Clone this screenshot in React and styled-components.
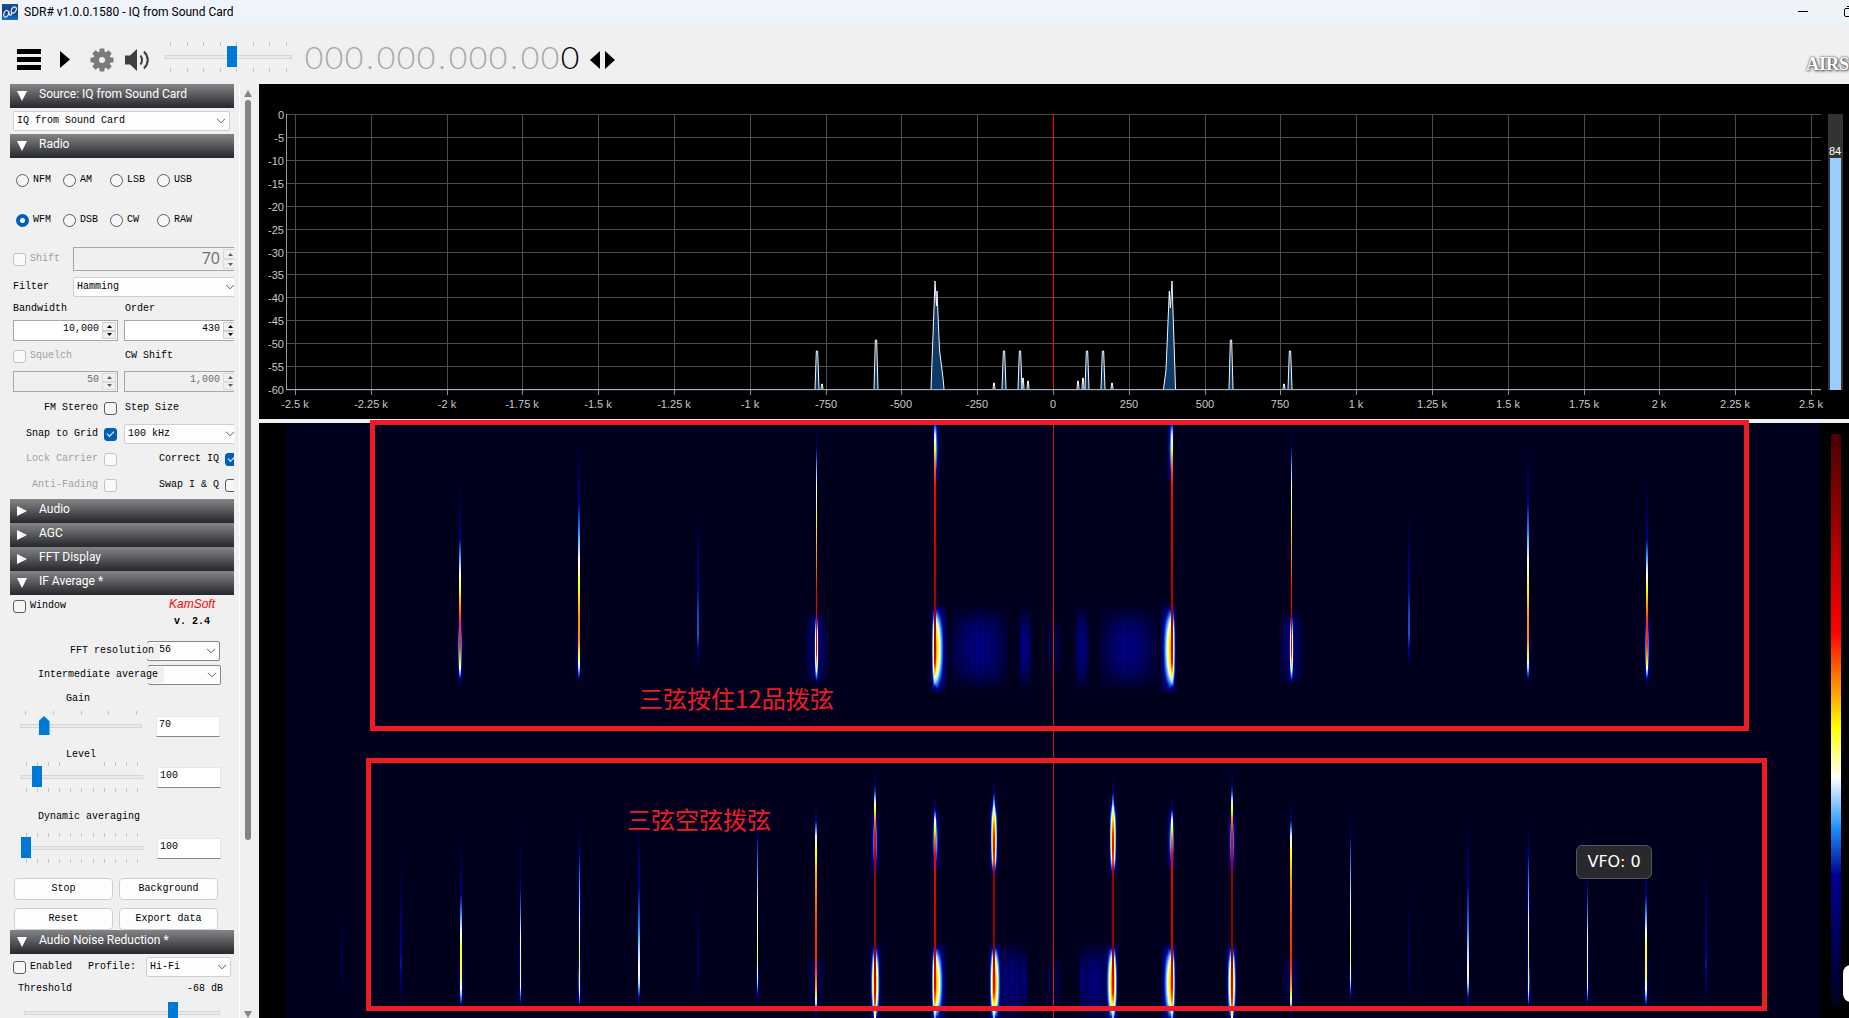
import React from "react";
import styled, { createGlobalStyle, css } from "styled-components";

const UI = 'Roboto, "Open Sans", sans-serif';
const MONO = '"Liberation Mono", "Noto Sans CJK SC", monospace';
const BLUE = "#0078d7";

const Global = createGlobalStyle`
  *, *::before, *::after { box-sizing: border-box; }
  html, body { margin: 0; height: 100%; overflow: hidden; }
  body { background: #f0f0f0; font: 10px/14px ${MONO}; color: #000; }
  button, input, select { font: inherit; color: inherit; margin: 0; border-radius: 0; }
`;

/* ---------- window ---------- */
const Window = styled.div`
  display: flex;
  flex-direction: column;
  height: 100vh;
  overflow: hidden;
`;
const TitleBar = styled.header`
  display: flex;
  align-items: center;
  flex: none;
  height: 23px;
  padding-left: 2px;
  gap: 6px;
  background: linear-gradient(90deg, #eff3fc 0 80%, #eef3f8);
  font: 12px/16px ${UI};
`;
const Title = styled.h1`
  flex: 1;
  margin: 0;
  font: inherit;
`;
const CaptionButton = styled.button`
  display: grid;
  place-items: center;
  width: 46px;
  height: 23px;
  padding: 0;
  border: 0;
  background: none;
`;
const CaptionButtons = styled.div`
  display: flex;
  margin-right: -23px;
`;
const Toolbar = styled.div`
  display: flex;
  align-items: center;
  flex: none;
  height: 61px;
  padding: 6px 0 0 16px;
  overflow: hidden;
`;
const IconButton = styled.button`
  display: grid;
  place-items: center;
  flex: none;
  width: ${(p) => p.$w || 36}px;
  height: 30px;
  margin-right: ${(p) => p.$mr || 0}px;
  padding: 6px 0 0;
  border: 0;
  background: none;
`;
const Frequency = styled.output`
  display: flex;
  margin-left: 12px;
  font: 300 32px/40px Lato, ${UI};
  color: #a6a6a6;
`;
const Digit = styled.span`
  width: ${(p) => (p.$dot ? 12 : 20)}px;
  text-align: center;
  color: ${(p) => (p.$active ? "#000" : "inherit")};
`;
const Brand = styled.div`
  margin-left: auto;
  padding-top: 14px;
  white-space: nowrap;
  font: bold 18px/30px "Liberation Serif", serif;
  color: #fff;
  text-shadow: 0 0 2px #333, 1px 1px 3px #444;
`;
const Body = styled.div`
  display: flex;
  flex: 1;
  min-height: 0;
`;

/* ---------- side panel ---------- */
const Sidebar = styled.aside`
  display: flex;
  flex: none;
  width: 259px;
  padding-left: 10px;
`;
const Panels = styled.div`
  width: 224px;
  overflow: hidden;
`;
const Scrollbar = styled.div`
  display: flex;
  flex-direction: column;
  align-items: center;
  width: 20px;
  margin-left: 5px;
  padding: 6px 4px 0 0;
  border-left: 1px solid #fff;
`;
const Thumb = styled.div`
  width: 6px;
  height: 740px;
  margin: 3px 0 auto;
  border-radius: 3px;
  background: #858585;
`;
const PanelHeader = styled.button`
  display: flex;
  align-items: center;
  width: 100%;
  height: 24px;
  padding: 0 0 4px 7px;
  gap: 12px;
  border: 0;
  background: linear-gradient(#858587, #5a5b5f 45%, #25272c);
  color: #fff;
  font: 12px/16px ${UI};
  svg { margin-top: 4px; }
`;
const Section = styled.div`
  padding: ${(p) => p.$pad || "0"};
`;
const Row = styled.div`
  display: flex;
  align-items: ${(p) => (p.$top ? "flex-start" : "center")};
  height: ${(p) => p.$h || 20}px;
  margin-top: ${(p) => p.$mt || 0}px;
  padding-left: ${(p) => p.$pl || 3}px;
`;
const Label = styled.label`
  flex: none;
  width: ${(p) => (p.$w ? p.$w + "px" : "auto")};
  white-space: nowrap;
  text-align: ${(p) => (p.$right ? "right" : "left")};
  padding-right: ${(p) => (p.$right ? 6 : 0)}px;
  color: ${(p) => (p.$off ? "#a0a0a0" : "#000")};
`;
const CoverLabel = styled(Label)`
  z-index: 1;
  width: auto;
  height: 16px;
  line-height: 16px;
  padding-right: 6px;
  margin-right: -${(p) => p.$over}px;
  margin-left: ${(p) => p.$indent}px;
  background: #f0f0f0;
`;
const Modes = styled.div`
  display: grid;
  grid-template-columns: repeat(4, 47px);
  grid-auto-rows: 40px;
  align-items: center;
  padding: 2px 0 0 6px;
`;
const Choice = styled.label`
  display: flex;
  align-items: center;
  height: 22px;
  gap: 4px;
`;
const Radio = styled.input.attrs({ type: "radio" })`
  appearance: none;
  width: 13px;
  height: 13px;
  border: 1px solid #5c5c5c;
  border-radius: 50%;
  background: #f6f6f6;
  &:checked { border: 4px solid #005fb8; background: #fff; }
`;
const Check = styled.input.attrs({ type: "checkbox" })`
  appearance: none;
  display: grid;
  place-items: center;
  flex: none;
  width: 13px;
  height: 13px;
  margin-right: ${(p) => p.$gap || 0}px;
  border: 1px solid #5c5c5c;
  border-radius: 3px;
  background: #f6f6f6;
  &:disabled { border-color: #c3c3c3; background: #fafafa; }
  &:checked { border-color: #005fb8; background: #005fb8; }
  &:checked::after {
    content: "";
    width: 7px;
    height: 4px;
    margin-top: -2px;
    border: solid #fff;
    border-width: 0 0 1px 1px;
    transform: rotate(-45deg);
  }
`;
const SelectBox = styled.div`
  display: grid;
  flex: none;
  align-items: center;
  width: ${(p) => p.$w}px;
  > * { grid-area: 1 / 1; }
  svg { justify-self: end; margin-right: 4px; pointer-events: none; }
`;
const SelectField = styled.select`
  appearance: none;
  width: 100%;
  height: 20px;
  padding: 0 4px ${(p) => (p.$strong ? 2 : 0)}px ${(p) => (p.$strong ? 5 : 3)}px;
  border: 1px solid ${(p) => (p.$strong ? "#868686" : "#d0d0d0")};
  border-radius: 2px;
  background: #fdfdfd;
`;
const SpinBox = styled.div`
  display: flex;
  flex: none;
  width: ${(p) => p.$w}px;
  height: ${(p) => p.$h || 21}px;
  margin-right: 6px;
  border: 1px solid #a5a7ac;
  background: ${(p) => (p.$off ? "#f0f0f0" : "#fff")};
  color: ${(p) => (p.$off ? "#6d6d6d" : "#000")};
`;
const SpinInput = styled.input`
  flex: 1;
  min-width: 0;
  padding: 0 2px 4px;
  border: 0;
  background: none;
  text-align: right;
  ${(p) => p.$big && css`padding-bottom: 2px; font: 16px/20px "Open Sans", sans-serif;`}
`;
const SpinButtons = styled.div`
  display: grid;
  grid-template-rows: 1fr 1fr;
  width: 14px;
  margin: 1px;
  opacity: ${(p) => (p.$off ? 0.6 : 1)};
`;
const SpinButton = styled.button`
  display: grid;
  place-items: center;
  min-height: 0;
  padding: 0;
  border: 1px solid #cfcfcf;
  background: #f0f0f0;
`;
const Credits = styled.div`
  width: 60px;
  margin-left: auto;
  margin-right: 12px;
  text-align: center;
  line-height: 18px;
`;
const Vendor = styled.div`
  font: italic 12px/18px "Liberation Sans", sans-serif;
  color: #f00;
`;
const Version = styled.div`
  font-weight: bold;
`;
const Heading = styled.div`
  display: flex;
  align-items: flex-end;
  height: ${(p) => p.$h}px;
  padding: 0 0 ${(p) => p.$pb}px ${(p) => p.$pl}px;
`;
const TextInput = styled.input`
  width: 64px;
  height: 21px;
  margin-left: 14px;
  padding: 0 2px 3px;
  border: 1px solid #e6e6e6;
  border-bottom-color: #868686;
  background: #fff;
`;
const Track = styled.div`
  display: flex;
  flex-direction: column;
  flex: none;
  justify-content: center;
  width: ${(p) => p.$w}px;
`;
const Ticks = styled.div`
  display: flex;
  justify-content: space-between;
  height: 4px;
  padding: 0 5px;
  visibility: ${(p) => (p.$hide ? "hidden" : "visible")};
`;
const Tick = styled.i`
  width: 1px;
  background: #c4c4c4;
  visibility: ${(p) => (p.$hide ? "hidden" : "inherit")};
`;
const Range = styled.input.attrs({ type: "range" })`
  appearance: none;
  width: 100%;
  height: 22px;
  background: none;
  &::-webkit-slider-runnable-track {
    height: 4px;
    border: 1px solid #d6d6d6;
    background: #e7eaea;
  }
  &::-webkit-slider-thumb {
    appearance: none;
    width: 10px;
    height: 21px;
    margin-top: -10px;
    margin-left: -1px;
    background: ${BLUE};
    ${(p) => p.$pointed && css`
      width: 11px;
      height: 19px;
      margin-top: -9px;
      clip-path: polygon(50% 0, 100% 28%, 100% 100%, 0 100%, 0 28%);
    `}
  }
`;
const Actions = styled.div`
  display: grid;
  grid-template-columns: 99px 99px;
  gap: 8px 6px;
  padding: 15px 0 0 4px;
`;
const PushButton = styled.button`
  height: 22px;
  padding: 0;
  border: 1px solid #d0d0d0;
  border-radius: 4px;
  background: #fdfdfd;
`;

/* ---------- display ---------- */
const Display = styled.main`
  position: relative;
  display: flex;
  flex-direction: column;
  flex: 1;
  min-width: 0;
  overflow: hidden;
  background: #000;
  svg { display: block; }
`;
const Plot = styled.svg`
  flex: none;
  width: 100%;
  text { font: 11px "Liberation Sans", sans-serif; fill: #c8c8c8; }
`;
const Splitter = styled.div`
  flex: none;
  height: 4px;
  background: #f0f0f0;
`;
const Marker = styled.div`
  position: absolute;
  left: ${(p) => p.$x}px;
  top: ${(p) => p.$y}px;
  width: ${(p) => p.$w}px;
  height: ${(p) => p.$h}px;
  border: 5px solid #ed1c24;
`;
const Note = styled.div`
  position: absolute;
  left: ${(p) => p.$x}px;
  top: ${(p) => p.$y}px;
  color: #ed1c24;
  font: 24px/28px "Noto Sans CJK SC", sans-serif;
  white-space: nowrap;
`;
const Tooltip = styled.div`
  position: absolute;
  left: 1317px;
  top: 761px;
  width: 76px;
  height: 34px;
  border: 1px solid #55565a;
  border-radius: 6px;
  background: rgba(42, 43, 47, 0.94);
  color: #fff;
  font: 16px/32px "DejaVu Sans", sans-serif;
  text-align: center;
`;
const Grip = styled.div`
  position: absolute;
  right: -14px;
  top: 881px;
  width: 20px;
  height: 37px;
  border-radius: 8px;
  background: #fff;
`;

/* ---------- small drawings ---------- */
const Chevron = () => (
  <svg width="10" height="6" viewBox="0 0 10 6" fill="none" stroke="#5c5c5c">
    <path d="M1 .8 5 4.8 9 .8" />
  </svg>
);
const Tri = ({ d, w = 10, h = 9, fill = "#fff" }) => (
  <svg width={w} height={h} viewBox="0 0 10 10" preserveAspectRatio="none">
    <path fill={fill} d={{ up: "M5 0 10 10H0Z", down: "M0 0H10L5 10Z", right: "M0 0 10 5 0 10Z", left: "M10 0V10L0 5Z" }[d]} />
  </svg>
);
const AppIcon = () => (
  <svg width="16" height="16" viewBox="0 0 16 16">
    <defs>
      <linearGradient id="app" x2="0" y2="1"><stop stopColor="#1b4f96" /><stop offset=".5" stopColor="#123a86" /><stop offset="1" stopColor="#1672c4" /></linearGradient>
    </defs>
    <rect width="16" height="16" fill="url(#app)" />
    <g fill="none" stroke="#dcecff" strokeWidth="1.2">
      <ellipse cx="4.200" cy="9.800" rx="2.300" ry="3.400" transform="rotate(25 4.200 9.800)" />
      <path d="M6.500 7.500C7.500 13.500 10.500 11 9.300 8" />
      <ellipse cx="11.800" cy="6" rx="2.200" ry="3.300" transform="rotate(30 11.800 6)" />
    </g>
  </svg>
);
const Gear = () => (
  <svg width="24" height="24" viewBox="-12 -12 24 24" fill="#7b7b7b">
    {[0, 45, 90, 135, 180, 225, 270, 315].map((a) => (
      <path key={a} d="M-3-7-2.200-11.500H2.200L3-7Z" transform={`rotate(${a})`} />
    ))}
    <path fillRule="evenodd" d="M0-8.500A8.500 8.500 0 1 1 0 8.500 8.500 8.500 0 1 1 0-8.500ZM0-3A3 3 0 1 0 0 3 3 3 0 1 0 0-3Z" />
  </svg>
);
const Speaker = () => (
  <svg width="25" height="22" viewBox="0 0 25 22" fill="#404040">
    <path d="M0 6.500H5L12 0V22L5 15.500H0Z" />
    <g fill="none" stroke="#404040" strokeWidth="2">
      <path d="M15.500 6.500Q18.500 11 15.500 15.500" />
      <path d="M19 2.500Q26.500 11 19 19.500" />
    </g>
  </svg>
);

/* ---------- form parts ---------- */
const Select = ({ id, value, w, strong, ...rest }) => (
  <SelectBox $w={w}>
    <SelectField id={id} defaultValue={value} $strong={strong} {...rest}>
      <option>{value}</option>
    </SelectField>
    <Chevron />
  </SelectBox>
);
const Spin = ({ id, value, w, h, off, big, label }) => (
  <SpinBox $w={w} $h={h} $off={off}>
    <SpinInput id={id} aria-label={label} defaultValue={value} disabled={off} $big={big} />
    <SpinButtons $off={off}>
      <SpinButton aria-label="Increase" disabled={off}><Tri d="up" w={5} h={3} fill="#000" /></SpinButton>
      <SpinButton aria-label="Decrease" disabled={off}><Tri d="down" w={5} h={3} fill="#000" /></SpinButton>
    </SpinButtons>
  </SpinBox>
);
const Slider = ({ id, w, value, top, bottom, pointed, label, skip = [] }) => (
  <Track $w={w}>
    <Ticks $hide={!top}>
      {Array.from({ length: top || 0 }, (_, i) => <Tick key={i} $hide={skip.includes(i)} />)}
    </Ticks>
    <Range id={id} aria-label={label} defaultValue={value} $pointed={pointed} />
    <Ticks $hide={!bottom}>
      {Array.from({ length: bottom || 0 }, (_, i) => <Tick key={i} />)}
    </Ticks>
  </Track>
);
const Panel = ({ title, open, pad, children }) => (
  <>
    <PanelHeader aria-expanded={!!open}>
      {open ? <Tri d="down" w={10} h={10} /> : <Tri d="right" w={10} h={10} />}
      {title}
    </PanelHeader>
    {open && <Section $pad={pad}>{children}</Section>}
  </>
);

/* ---------- spectrum ---------- */
const CENTER = 1053;
const BASE = 389;
const PEAKS = [
  [817, 351, 2], [822, 384, 1], [876, 340, 2], [994, 383, 1], [1004, 351, 2], [1020, 351, 2], [1023, 378, 1], [1028, 381, 1],
  [1078, 381, 1], [1083, 378, 1], [1087, 351, 2], [1103, 351, 2], [1112, 383, 1], [1231, 340, 2], [1284, 384, 1], [1290, 351, 2],
];
const fmt = (k) => {
  const v = k * 250;
  return Math.abs(v) >= 1000 ? `${v / 1000} k` : String(v);
};
function Spectrum() {
  const cols = Array.from({ length: 21 }, (_, i) => i - 10);
  const rows = Array.from({ length: 13 }, (_, i) => i);
  const rowY = (i) => Math.round(114 + (i * 275) / 12) + 0.5;
  return (
    <Plot viewBox="259 84 1590 335" role="img" aria-label="Spectrum">
      <g stroke="#4b4b4b">
        {rows.map((i) => <path key={i} d={`M286 ${rowY(i)}H1821`} />)}
        {cols.map((k) => <path key={k} d={`M${Math.round(CENTER + k * 75.8) + 0.5} 114V389`} />)}
      </g>
      <g fill="#0d3a66" stroke="#f4f6f8">
        {PEAKS.map(([x, y, w]) => <path key={x} d={`M${x - w} ${BASE}L${x - w / 3} ${y}H${x + w / 3}L${x + w} ${BASE}`} />)}
        <path d="M931 389 935 281 936.500 306 937 291 939.500 350 943 378 944 389" />
        <path d="M1163.500 389 1166 370 1169.300 291 1170.400 308 1172 281 1175.500 389" />
      </g>
      <path d="M286.500 114V389" stroke="#9a9a9a" />
      <path d="M286 389.500H1821" stroke="#a9b0b8" />
      <path d="M286 390.500H1821" stroke="#0b2038" />
      {cols.map((k) => {
        const x = Math.round(CENTER + k * 75.8);
        return (
          <g key={k}>
            <path d={`M${x + 0.5} 390V395`} stroke="#8c8c8c" />
            <text x={x} y="408" textAnchor="middle">{fmt(k)}</text>
          </g>
        );
      })}
      {rows.map((i) => <text key={i} x="284" y={rowY(i) + 4} textAnchor="end">{i ? -5 * i : 0}</text>)}
      <path d="M1053.500 114V389" stroke="#f00" />
      <rect x="1828" y="114" width="15" height="276" fill="#333" />
      <rect x="1830" y="158" width="11" height="232" fill="#99ccff" />
      <text x="1829" y="155" style={{ fill: "#fff" }}>84</text>
    </Plot>
  );
}

/* ---------- waterfall ---------- */
const PALETTE = [
  [0, 0, 0, 30], [0.23, 0, 0, 145], [0.313, 30, 144, 255], [0.4, 255, 255, 255],
  [0.487, 255, 255, 0], [0.655, 255, 0, 0], [1, 74, 0, 0],
];
function heat(v) {
  const t = Math.max(0, Math.min(1, v));
  let i = 1;
  while (i < PALETTE.length - 1 && t > PALETTE[i][0]) i += 1;
  const a = PALETTE[i - 1];
  const b = PALETTE[i];
  const f = (t - a[0]) / (b[0] - a[0]);
  return `rgb(${[1, 2, 3].map((k) => Math.round(a[k] + (b[k] - a[k]) * f)).join(",")})`;
}
function lineAt(keys, y) {
  if (y <= keys[0][0]) return y === keys[0][0] ? keys[0][1] : 0;
  for (let i = 1; i < keys.length; i += 1) {
    if (y <= keys[i][0]) {
      const [y0, v0] = keys[i - 1];
      const [y1, v1] = keys[i];
      return v0 + ((v1 - v0) * (y - y0)) / (y1 - y0);
    }
  }
  return 0;
}
const glow = (b, dx, y) => {
  const side = dx < 0 ? b.l : b.r;
  const fx = 1 - Math.abs(dx) / (side + 1);
  const fy = 1 - ((y - b.y) / b.h) ** 2;
  return fx > 0 && fy > 0 ? b.a * Math.pow(fx, 0.8) * Math.pow(fy, 0.6) : 0;
};
const flip = (b) => ({ ...b, l: b.r, r: b.l });

/* offset from centre, line width, key levels along y, glowing parts */
const UPPER = [
  [593, 2, [[480, 0], [530, 0.17], [552, 0.3], [573, 0.4], [590, 0.487], [620, 0.62], [645, 0.63], [662, 0.5], [669, 0.4], [676, 0.28], [688, 0]], [{ y: 648, h: 34, a: 0.42, l: 2, r: 2 }]],
  [474, 2, [[448, 0], [500, 0.22], [530, 0.31], [560, 0.4], [590, 0.487], [618, 0.56], [640, 0.56], [658, 0.47], [666, 0.4], [673, 0.29], [683, 0]], [{ y: 652, h: 25, a: 0.3, l: 2, r: 1 }]],
  [355, 2, [[515, 0], [560, 0.15], [588, 0.23], [612, 0.27], [635, 0.28], [650, 0.22], [668, 0]], []],
  [237, 1, [[428, 0], [448, 0.22], [465, 0.33], [485, 0.4], [520, 0.487], [560, 0.57], [590, 0.65], [620, 0.72], [650, 0.7], [665, 0.5], [674, 0.38], [686, 0]], [{ y: 648, h: 36, a: 0.6, l: 2, r: 2 }, { y: 648, h: 36, a: 0.2, l: 12, r: 12 }]],
  [118, 2, [[420, 0.2], [430, 0.33], [438, 0.42], [450, 0.487], [462, 0.57], [485, 0.65], [560, 0.76], [615, 0.84], [650, 0.8], [662, 0.66], [674, 0.48], [682, 0.36], [692, 0]], [{ y: 448, h: 36, a: 0.38, l: 1, r: 4 }, { y: 649, h: 45, a: 0.58, l: 3, r: 11 }]],
];
const LOWER = [
  [711, 2, [[915, 0], [955, 0.1], [975, 0.08], [990, 0]], []],
  [652, 2, [[860, 0], [930, 0.17], [965, 0.25], [985, 0.15], [1002, 0]], []],
  [592, 2, [[840, 0], [890, 0.2], [912, 0.31], [932, 0.4], [945, 0.47], [978, 0.47], [990, 0.4], [1000, 0.28], [1014, 0]], [{ y: 980, h: 24, a: 0.25, l: 2, r: 2 }]],
  [533, 1, [[830, 0], [880, 0.2], [915, 0.32], [935, 0.4], [965, 0.47], [985, 0.42], [1000, 0.25], [1012, 0]], [{ y: 970, h: 36, a: 0.34, l: 1, r: 1 }]],
  [474, 1, [[820, 0], [850, 0.22], [880, 0.31], [920, 0.4], [950, 0.46], [980, 0.48], [992, 0.4], [1002, 0.28], [1010, 0]], [{ y: 920, h: 80, a: 0.25, l: 1, r: 1 }, { y: 980, h: 26, a: 0.38, l: 2, r: 1 }]],
  [414, 2, [[830, 0], [870, 0.2], [920, 0.29], [955, 0.38], [972, 0.4], [984, 0.37], [998, 0.22], [1012, 0]], []],
  [355, 2, [[895, 0], [950, 0.12], [975, 0.1], [995, 0]], []],
  [296, 1, [[815, 0], [842, 0.25], [880, 0.35], [900, 0.39], [935, 0.43], [960, 0.46], [982, 0.38], [992, 0.26], [1005, 0]], [{ y: 980, h: 20, a: 0.28, l: 1, r: 1 }]],
  [237, 2, [[806, 0], [822, 0.24], [832, 0.35], [838, 0.41], [855, 0.487], [885, 0.56], [930, 0.62], [965, 0.63], [988, 0.54], [998, 0.46], [1004, 0.36], [1010, 0.22], [1018, 0.05]], [{ y: 980, h: 26, a: 0.3, l: 1, r: 1 }, { y: 980, h: 24, a: 0.14, l: 8, r: 8 }]],
  [178, 2, [[772, 0], [790, 0.24], [800, 0.37], [808, 0.46], [820, 0.57], [835, 0.65], [870, 0.84], [960, 0.86], [990, 0.7], [1004, 0.6], [1012, 0.49], [1018, 0.42]], [{ y: 842, h: 34, a: 0.38, l: 3, r: 3 }, { y: 983, h: 40, a: 0.58, l: 4, r: 5 }]],
  [118, 2, [[795, 0], [812, 0.26], [820, 0.4], [830, 0.487], [840, 0.58], [855, 0.66], [900, 0.72], [965, 0.76], [985, 0.68], [1000, 0.57], [1010, 0.42], [1018, 0.32]], [{ y: 840, h: 32, a: 0.4, l: 2, r: 4 }, { y: 983, h: 40, a: 0.58, l: 3, r: 10 }]],
  [59, 2, [[778, 0], [797, 0.26], [807, 0.38], [817, 0.487], [835, 0.64], [850, 0.66], [862, 0.6], [874, 0.84], [950, 0.86], [975, 0.76], [995, 0.62], [1006, 0.45], [1018, 0.34]], [{ y: 838, h: 38, a: 0.62, l: 3, r: 3 }, { y: 983, h: 40, a: 0.62, l: 4, r: 7 }]],
];
/* faint haze between the strong lines: first x offset, last, peak level, centre y, half height */
const HAZE = [
  [46, 104, 0.22, 648, 42], [22, 36, 0.23, 648, 42], [2, 7, 0.13, 648, 32],
  [26, 58, 0.21, 982, 40], [27, 31, 0.28, 980, 32], [2, 7, 0.13, 982, 28],
];
function buildStrips() {
  const strips = [];
  const add = (x, w, y0, y1, level) => {
    const n = Math.max(6, Math.ceil((y1 - y0) / 5));
    const stops = [];
    let max = 0;
    for (let i = 0; i <= n; i += 1) {
      const v = level(y0 + ((y1 - y0) * i) / n);
      max = Math.max(max, v);
      stops.push([i / n, heat(v)]);
    }
    if (max > 0.02) strips.push({ x, w, y0, y1: Math.min(y1, 1018), full: y1, stops });
  };
  HAZE.forEach(([a, b, peak, cy, h]) => {
    [1, -1].forEach((s) => {
      for (let d = a; d < b; d += 2) {
        const t = (d - a + 1) / (b - a);
        const p = peak * (0.2 + 0.8 * Math.sin(Math.PI * t)) * (0.86 + 0.14 * Math.sin(d * 1.1));
        add(s > 0 ? CENTER + d : CENTER - d - 1, 2, cy - h, cy + h, (y) => p * Math.max(0, 1 - ((y - cy) / h) ** 2));
      }
    });
  });
  [...UPPER, ...LOWER].forEach(([off, w, keys, glows]) => {
    [-1, 1].forEach((s) => {
      const x = CENTER + s * off + (s > 0 ? 1 : 0);
      const parts = s < 0 ? glows : glows.map(flip);
      for (let d = -13; d <= 13; d += 1) {
        const core = d === 0 || (w === 2 && d === -1);
        const gap = d < 0 && w === 2 ? d + 1 : d;
        if (core) {
          add(x + d, 1, keys[0][0], keys[keys.length - 1][0], (y) => Math.max(lineAt(keys, y), ...parts.map((b) => glow(b, 0, y) * 0.8)));
        } else {
          [...new Set(parts.map((b) => b.y))].forEach((cy) => {
            const near = parts.filter((b) => b.y === cy && glow(b, gap, cy) > 0.03);
            if (!near.length) return;
            const h = Math.max(...near.map((b) => b.h));
            add(x + d, 1, cy - h, cy + h, (y) => Math.max(...near.map((q) => glow(q, gap, y))));
          });
        }
      }
    });
  });
  return strips;
}
const STRIPS = buildStrips();

function Waterfall() {
  return (
    <Plot viewBox="259 423 1590 595" role="img" aria-label="Waterfall">
      <defs>
        {STRIPS.map((s, i) => (
          <linearGradient key={i} id={`s${i}`} gradientUnits="userSpaceOnUse" x1="0" x2="0" y1={s.y0} y2={s.full}>
            {s.stops.map(([o, c]) => <stop key={o} offset={o} stopColor={c} />)}
          </linearGradient>
        ))}
        <linearGradient id="scale" x2="0" y2="1">
          {PALETTE.map(([v]) => <stop key={v} offset={1 - v} stopColor={heat(v)} />).reverse()}
        </linearGradient>
      </defs>
      <rect x="286" y="423" width="1534" height="595" fill="#00001e" />
      {STRIPS.map((s, i) => (
        <rect key={i} x={s.x} y={s.y0} width={s.w} height={s.y1 - s.y0} fill={`url(#s${i})`} shapeRendering="crispEdges" />
      ))}
      <path d="M1053.500 423V1018" stroke="#d8101c" />
      <rect x="1831" y="434" width="10" height="573" fill="url(#scale)" />
    </Plot>
  );
}

/* ---------- page ---------- */
const MODES = ["NFM", "AM", "LSB", "USB", "WFM", "DSB", "CW", "RAW"];

export default function App() {
  return (
    <Window>
      <Global />
      <TitleBar>
        <AppIcon />
        <Title>SDR# v1.0.0.1580 - IQ from Sound Card</Title>
        <CaptionButtons>
          <CaptionButton aria-label="Minimize">
            <svg width="10" height="10"><path d="M0 4.500H10" stroke="#000" /></svg>
          </CaptionButton>
          <CaptionButton aria-label="Restore">
            <svg width="11" height="11" fill="none" stroke="#000">
              <rect x=".5" y="2.500" width="8" height="8" rx="1.500" />
              <path d="M3 .5H8.500Q10.500.5 10.500 2.500V8" />
            </svg>
          </CaptionButton>
        </CaptionButtons>
      </TitleBar>

      <Toolbar>
        <IconButton $w={26} aria-label="Menu">
          <svg width="24" height="21"><path d="M0 2.500H24M0 10.500H24M0 18.500H24" stroke="#000" strokeWidth="5" /></svg>
        </IconButton>
        <IconButton $w={46} aria-label="Play"><Tri d="right" w={10} h={17} fill="#000" /></IconButton>
        <IconButton $w={28} aria-label="Settings"><Gear /></IconButton>
        <IconButton $w={42} $mr={7} aria-label="Mute"><Speaker /></IconButton>
        <Slider label="Volume" w={127} value={54} top={8} bottom={8} />
        <Frequency aria-label="Frequency">
          {"000.000.000.000".split("").map((c, i) => (
            <Digit key={i} $dot={c === "."} $active={i === 14}>{c}</Digit>
          ))}
        </Frequency>
        <IconButton $w={44} aria-label="Tuning mode">
          <svg width="25" height="18"><path d="M10 0V18L0 9ZM15 0V18L25 9Z" /></svg>
        </IconButton>
        <Brand>AIRS</Brand>
      </Toolbar>

      <Body>
        <Sidebar>
          <Panels>
            <Panel title="Source: IQ from Sound Card" open pad="3px 0">
              <Row><Select aria-label="Source" value="IQ from Sound Card" w={217} /></Row>
            </Panel>

            <Panel title="Radio" open pad="0 0 1px">
              <Modes>
                {MODES.map((m) => (
                  <Choice key={m}><Radio name="mode" defaultChecked={m === "WFM"} />{m}</Choice>
                ))}
              </Modes>
              <Row $h={24} $mt={7}>
                <Check id="shift" disabled $gap={4} />
                <Label htmlFor="shift" $w={43} $off>Shift</Label>
                <Spin label="Shift value" value="70" w={166} h={24} off big />
              </Row>
              <Row $mt={6}>
                <Label htmlFor="filter" $w={60}>Filter</Label>
                <Select id="filter" value="Hamming" w={166} />
              </Row>
              <Row $h={23}>
                <Label htmlFor="bandwidth" $w={112}>Bandwidth</Label>
                <Label htmlFor="order">Order</Label>
              </Row>
              <Row $h={21}>
                <Spin id="bandwidth" value="10,000" w={105} />
                <Spin id="order" value="430" w={115} />
              </Row>
              <Row $h={30}>
                <Check id="squelch" disabled $gap={4} />
                <Label htmlFor="squelch" $w={95} $off>Squelch</Label>
                <Label htmlFor="cwshift">CW Shift</Label>
              </Row>
              <Row $h={21}>
                <Spin label="Squelch value" value="50" w={105} off />
                <Spin id="cwshift" value="1,000" w={115} off />
              </Row>
              <Row $h={32}>
                <Label htmlFor="stereo" $w={91} $right>FM Stereo</Label>
                <Check id="stereo" $gap={8} />
                <Label htmlFor="step">Step Size</Label>
              </Row>
              <Row>
                <Label htmlFor="snap" $w={91} $right>Snap to Grid</Label>
                <Check id="snap" defaultChecked $gap={7} />
                <Select id="step" value="100 kHz" w={115} />
              </Row>
              <Row $h={26} $mt={2}>
                <Label htmlFor="lock" $w={91} $right $off>Lock Carrier</Label>
                <Check id="lock" disabled />
                <Label htmlFor="iq" $w={108} $right>Correct IQ</Label>
                <Check id="iq" defaultChecked />
              </Row>
              <Row $h={26}>
                <Label htmlFor="fading" $w={91} $right $off>Anti-Fading</Label>
                <Check id="fading" disabled />
                <Label htmlFor="swap" $w={108} $right>Swap I &amp; Q</Label>
                <Check id="swap" />
              </Row>
            </Panel>

            <Panel title="Audio" />
            <Panel title="AGC" />
            <Panel title="FFT Display" />

            <Panel title="IF Average *" open>
              <Row $h={38} $top>
                <Choice><Check id="window" />Window</Choice>
                <Credits>
                  <Vendor>KamSoft</Vendor>
                  <Version>v. 2.4</Version>
                </Credits>
              </Row>
              <Row $mt={8}>
                <CoverLabel htmlFor="fft" $indent={57} $over={13}>FFT resolution</CoverLabel>
                <Select id="fft" value="256" w={73} strong />
              </Row>
              <Row $mt={4}>
                <CoverLabel htmlFor="inter" $indent={25} $over={16}>Intermediate average</CoverLabel>
                <Select id="inter" value="" w={73} strong />
              </Row>
              <Heading $h={26} $pb={5} $pl={56}><Label htmlFor="gain">Gain</Label></Heading>
              <Row $h={30} $pl={10}>
                <Slider id="gain" w={122} value={17} top={5} pointed />
                <TextInput aria-label="Gain value" defaultValue="70" />
              </Row>
              <Heading $h={21} $pb={0} $pl={56}><Label htmlFor="level">Level</Label></Heading>
              <Row $h={30} $pl={11}>
                <Slider id="level" w={122} value={10} top={11} bottom={11} skip={[4, 5, 6]} />
                <TextInput aria-label="Level value" defaultValue="100" />
              </Row>
              <Heading $h={41} $pb={9} $pl={28}><Label htmlFor="dyn">Dynamic averaging</Label></Heading>
              <Row $h={30} $pl={11}>
                <Slider id="dyn" w={122} value={0} top={11} bottom={11} />
                <TextInput aria-label="Dynamic averaging value" defaultValue="100" />
              </Row>
              <Actions>
                <PushButton>Stop</PushButton>
                <PushButton>Background</PushButton>
                <PushButton>Reset</PushButton>
                <PushButton>Export data</PushButton>
              </Actions>
            </Panel>

            <Panel title="Audio Noise Reduction *" open pad="3px 0">
              <Row>
                <Check id="enabled" $gap={4} />
                <Label htmlFor="enabled" $w={58}>Enabled</Label>
                <Label htmlFor="profile" $w={58}>Profile:</Label>
                <Select id="profile" value="Hi-Fi" w={85} />
              </Row>
              <Row $h={24} $pl={8}>
                <Label htmlFor="threshold" $w={169}>Threshold</Label>
                <output>-68 dB</output>
              </Row>
              <Row $h={24} $pl={14}>
                <Slider id="threshold" w={196} value={78} />
              </Row>
            </Panel>
          </Panels>
          <Scrollbar>
            <Tri d="up" w={8} h={7} fill="#858585" />
            <Thumb />
            <Tri d="down" w={8} h={7} fill="#858585" />
          </Scrollbar>
        </Sidebar>

        <Display>
          <Spectrum />
          <Splitter />
          <Waterfall />
          <Marker $x={111} $y={336} $w={1379} $h={311} />
          <Marker $x={107} $y={674} $w={1401} $h={253} />
          <Note $x={380} $y={600}>三弦按住12品拨弦</Note>
          <Note $x={368} $y={721}>三弦空弦拨弦</Note>
          <Tooltip role="tooltip">VFO: 0</Tooltip>
          <Grip />
        </Display>
      </Body>
    </Window>
  );
}
